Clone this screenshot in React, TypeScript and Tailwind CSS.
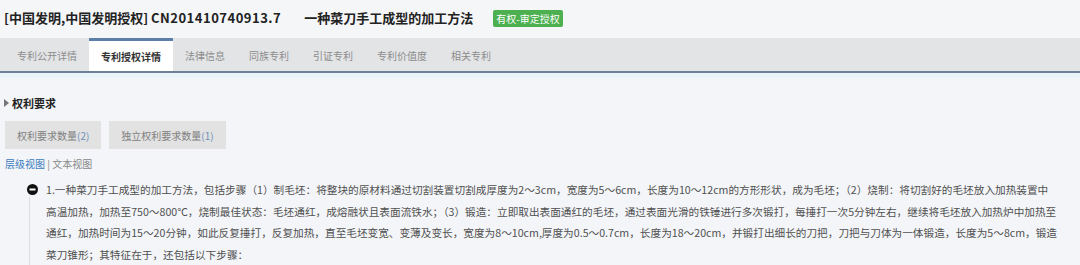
import React from 'react';

const tabs = ['专利公开详情', '专利授权详情', '法律信息', '同族专利', '引证专利', '专利价值度', '相关专利'];

// 权利要求第一条，按截图分行
const claimLines = [
  '1.一种菜刀手工成型的加工方法，包括步骤（1）制毛坯：将整块的原材料通过切割装置切割成厚度为2～3cm，宽度为5～6cm，长度为10～12cm的方形形状，成为毛坯；（2）烧制：将切割好的毛坯放入加热装置中',
  '高温加热，加热至750～800℃，烧制最佳状态：毛坯通红，成熔融状且表面流铁水；（3）锻造：立即取出表面通红的毛坯，通过表面光滑的铁锤进行多次锻打，每捶打一次5分钟左右，继续将毛坯放入加热炉中加热至',
  '通红，加热时间为15～20分钟，如此反复捶打，反复加热，直至毛坯变宽、变薄及变长，宽度为8～10cm,厚度为0.5～0.7cm，长度为18～20cm，并锻打出细长的刀把，刀把与刀体为一体锻造，长度为5～8cm，锻造',
  '菜刀锥形；其特征在于，还包括以下步骤：',
];

export default function App() {
  const active = 1;

  return (
    <div className="w-[1080px] h-[265px] overflow-hidden bg-[#f3f5f8] font-['Noto_Sans_CJK_SC',sans-serif]">
      {/* 标题栏 */}
      <div className="h-[38px] bg-[#f5f6f8] flex items-center pl-[4px] pb-[2px]">
        <span className="text-[13px] font-bold text-[#222] whitespace-nowrap">
          [中国发明,中国发明授权] <span className="tracking-[0.5px]">CN201410740913.7</span>
        </span>
        <span className="ml-[23px] text-[13px] font-bold text-[#222] whitespace-nowrap">
          一种菜刀手工成型的加工方法
        </span>
        <span className="ml-[20px] bg-[#4caf50] text-white text-[10px] leading-[17px] px-[3px] rounded-[2px] whitespace-nowrap">
          有权-审定授权
        </span>
      </div>

      {/* 标签栏 */}
      <div className="h-[35px] bg-[#e3e4e6] border-b-2 border-[#6e8096] flex pl-[5px]">
        {tabs.map((t, i) => (
          <div
            key={t}
            className={
              i === active
                ? 'px-3 bg-white border-t-[3px] border-[#5b7fa6] flex items-center text-[10px] font-bold text-[#333] whitespace-nowrap'
                : 'px-3 flex items-center text-[10px] text-[#8c8c8c] whitespace-nowrap pt-[1px]'
            }
          >
            {t}
          </div>
        ))}
      </div>
      <div className="h-[5px] bg-[#e9f3fa]" />

      {/* 权利要求 */}
      <div className="pl-[4px] pt-[17px] flex items-center">
        <span className="w-0 h-0 border-y-[4px] border-y-transparent border-l-[5px] border-l-[#777] mr-[3px]" />
        <span className="text-[11px] font-bold text-[#222] leading-[16px]">权利要求</span>
      </div>

      <div className="flex gap-2 pl-[5px] mt-[10px]">
        <div className="h-[28px] px-[12px] bg-[#e2e2e2] flex items-center text-[10px] text-[#808080]">
          权利要求数量<span className="text-[#7090b8]">(2)</span>
        </div>
        <div className="h-[28px] px-[12px] bg-[#e2e2e2] flex items-center text-[10px] text-[#808080]">
          独立权利要求数量<span className="text-[#7090b8]">(1)</span>
        </div>
      </div>

      <div className="pl-[5px] mt-[7px] text-[10px] leading-[16px] text-[#888]">
        <span className="text-[#3a7cc0]">层级视图</span> | 文本视图
      </div>

      {/* 权利要求内容 */}
      <div className="flex mt-[7px] pl-[26px]">
        <div className="relative w-[12px] shrink-0 flex flex-col items-center">
          <svg width="11" height="11" viewBox="0 0 11 11" className="mt-[5px] shrink-0">
            <circle cx="5.5" cy="5.5" r="5.5" fill="#111" />
            <rect x="2.5" y="4.5" width="6" height="2" fill="#fff" />
          </svg>
          <div className="w-px flex-1 bg-[#dcdcdc] mt-[2px] -ml-[5px]" />
        </div>
        <div className="ml-[8px] text-[10.65px] leading-[21.5px] text-[#505050]">
          {claimLines.map((l) => (
            <div key={l} className="whitespace-nowrap">{l}</div>
          ))}
        </div>
      </div>
    </div>
  );
}
